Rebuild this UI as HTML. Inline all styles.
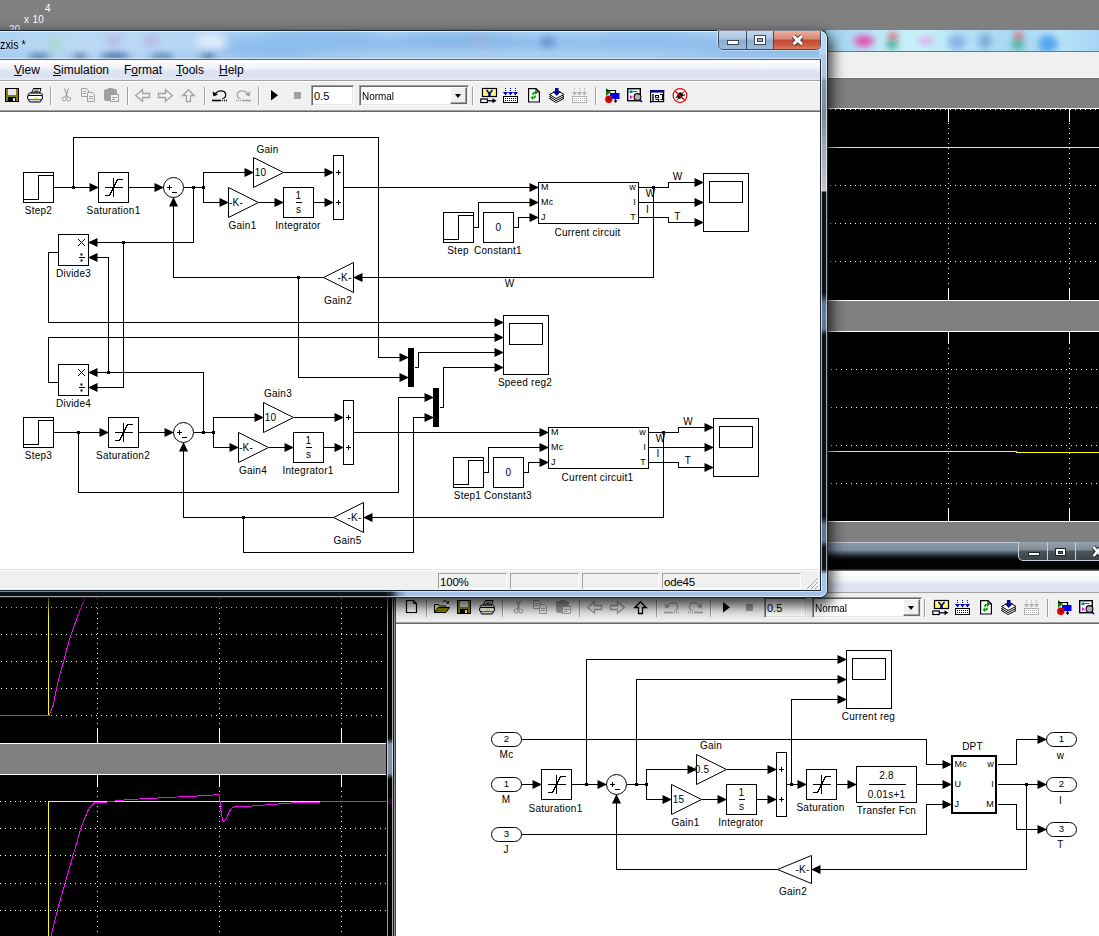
<!DOCTYPE html><html><head><meta charset="utf-8"><title>zxis</title><style>
html,body{margin:0;padding:0}
body{width:1099px;height:936px;overflow:hidden;position:relative;background:#808080;font-family:"Liberation Sans",sans-serif;font-size:12px;color:#000}
.abs{position:absolute}
.dg{position:absolute}
.dt{font-family:"Liberation Sans",sans-serif;font-size:10px;text-anchor:middle;fill:#000;letter-spacing:.25px}
#bgstrip1{left:826px;top:30px;width:273px;height:21px;background:linear-gradient(90deg,#9fd0f0 0,#bfe9f9 20%,#c9f2fb 35%,#b5e2f6 50%,#a9d6f3 70%,#b7e4f8 85%,#a8d4f4 100%);overflow:hidden}
#bgstrip1 i{position:absolute;display:block;border-radius:50%;filter:blur(3px)}
#bgstrip2{left:826px;top:51px;width:273px;height:27px;background:#f0f0f0;border-top:1px solid #6b7884;box-sizing:border-box;border-bottom:1px solid #fff}
#gray1{left:826px;top:78px;width:273px;height:30px;background:#808080;border-top:1px solid #6a6a6a;box-sizing:border-box}
#strip3{left:826px;top:300px;width:273px;height:1px;background:#fff}
/* sub window */
#sub{left:387px;top:542px;width:720px;height:400px}
#subtitle{left:0;top:0;width:720px;height:29px;background:linear-gradient(#8797a7 0,#7c8d9e 7px,#4a5662 10px,#12171c 14px,#020304 17px,#000 26px,#5c5c5c 27px,#7a7a7a 28px);border-top:1px solid #c0c6cc;box-sizing:border-box}
#subcap{left:631px;top:0;width:100px;height:19px;border:1px solid #c8d0d8;border-top:none;border-radius:0 0 5px 5px;box-sizing:border-box;background:linear-gradient(#97a3ae 0,#7d8993 45%,#4c555d 50%,#3a4249 100%)}
#subcap b{position:absolute;top:0;height:18px;width:1px;background:#c8d0d8}
#submenu{left:8px;top:29px;width:712px;height:21px;background:linear-gradient(#fff 0,#f3f5fb 40%,#dde3f3 60%,#dfe5f5 100%);border-top:1px solid #fff}
#subtool{left:8px;top:50px;width:712px;height:30px;background:#f0f0f0;border-top:1px solid #a0a0a0;box-sizing:border-box}
#subtoolb{left:8px;top:80px;width:712px;height:1px;background:#a0a0a0}
#subcanvas{left:8px;top:81px;width:712px;height:320px;background:#fff;border-left:1px solid #696969;border-top:1px solid #696969}
#subframe{left:-1px;top:29px;width:10px;height:380px;background:linear-gradient(#000 0,#000 167px,#7f93a8 173px,#7f93a8 202px,#000 208px,#000 226px,#2c0f29 231px,#000 236px,#000 100%)}
#subframe:before{content:"";position:absolute;left:0;top:0;bottom:0;width:10px;background:linear-gradient(90deg,#000 0,#000 1px,rgba(255,255,255,.6) 1px,rgba(255,255,255,.6) 2px,transparent 2px,transparent 6px,rgba(255,255,255,.65) 6px,rgba(255,255,255,.65) 7px,#14181c 7px,#14181c 8px,#8a9096 8px,#8a9096 9px,#3c4044 9px,#3c4044 10px)}
/* main window */
#win{left:-30px;top:30px;width:858px;height:568px;border-radius:8px;box-sizing:border-box;border:1px solid #1a2430;background:#0c1118;box-shadow:2px 6px 14px 2px rgba(0,0,0,.75)}
#wininner{left:0;top:0;right:0;bottom:0;border-radius:7px;overflow:hidden}
#wininner:after{content:"";position:absolute;left:0;top:0;right:0;bottom:0;border-radius:7px;border:1px solid rgba(255,255,255,.62)}
#wtitle{left:0;top:0;right:0;height:29px;background:linear-gradient(#a9d1f4 0,#91c1ee 11px,#8dbdec 20px,#9ec6ee 27px,#b5d6f3 28px)}
#wtitle i{position:absolute;display:block;border-radius:50%;filter:blur(5px)}
#wright{right:0;top:0;width:8px;height:566px;background:linear-gradient(#b9d6f2 0,#b9d6f2 22px,#b3cde9 24px,#aac4e0 46px,#8397ad 50px,#7d8fa3 76px,#7c8795 80px,#a4abb3 120px,#c5c9cd 160px,#0c1118 161px,#0c1118 262px,#5b7592 272px,#6682a2 285px,#5b7592 298px,#0c1118 304px,#0c1118 486px,#5b7592 494px,#5b7592 510px,#10151c 516px,#10151c 538px,#a3c4e8 543px,#a3c4e8 566px)}
#wbottom{left:0;right:0;bottom:0;height:8px;background:linear-gradient(90deg,#0c1118 0,#0c1118 414px,#232d3a 420px,#7d9abd 428px,#a3c4e8 436px,#a3c4e8 100%)}
#client{left:0;top:59px;width:820px;height:531px;background:#fff;border-right:1px solid #1d232b;border-top:1px solid #59626d;border-bottom:1px solid #1d232b;box-shadow:1px 0 0 0 rgba(255,255,255,.7),0 1px 0 0 rgba(255,255,255,.5),0 -1px 0 0 rgba(255,255,255,.45);box-sizing:border-box;width:821px;height:532px}
#menubar{left:0;top:60px;width:820px;height:20px;background:linear-gradient(#fdfdfe 0,#f1f3fa 40%,#dfe4f3 55%,#dde2f2 85%,#e6eaf6 100%)}
#menubar span{position:absolute;top:3px;font-size:12px;white-space:nowrap}
#menubar u{text-decoration:underline;text-underline-offset:1px;text-decoration-thickness:1px}
#toolbar{left:0;top:80px;width:820px;height:32px;background:#f0f0f0;box-sizing:border-box;border-top:1px solid #a0a0a0;border-bottom:1px solid #696969}
#toolbar:before{content:"";position:absolute;left:0;right:0;top:0;height:1px;background:#fff}
#toolbar:after{content:"";position:absolute;left:0;right:0;bottom:0;height:1px;background:#a0a0a0}
.fld{position:absolute;height:21px;box-sizing:border-box;background:#fff;border:1px solid;border-color:#a0a0a0 #fff #fff #a0a0a0;box-shadow:inset 1px 1px 0 #696969,inset -1px -1px 0 #e3e3e3;font-size:11px;line-height:20px;padding-left:2px;white-space:nowrap;overflow:hidden}
.ddb{position:absolute;right:1px;top:1px;width:17px;height:17px;background:#f0f0f0;box-sizing:border-box;border:1px solid;border-color:#fff #696969 #696969 #fff;box-shadow:inset -1px -1px 0 #a0a0a0}
.ddb:after{content:"";position:absolute;left:4px;top:6px;border:3.5px solid transparent;border-top:4px solid #000;border-bottom:none}
#status{left:0;top:570px;width:820px;height:19px;background:#f0f0f0;border-top:1px solid #fff}
#status:before{content:"";position:absolute;left:0;right:0;top:-2px;height:1px;background:#e3e3e3}
.sf{position:absolute;top:2px;height:16px;box-sizing:border-box;border:1px solid;border-color:#a0a0a0 #fff #fff #a0a0a0;font-size:11.5px;line-height:16px;padding-left:1px;letter-spacing:-.2px}
#caps{left:718px;top:31px;width:103px;height:19px;box-sizing:border-box;border:1px solid #3e4b59;border-top:none;border-radius:0 0 5px 5px;overflow:hidden;box-shadow:0 0 0 1px rgba(255,255,255,.45)}
#caps div{position:absolute;top:0;height:18px}
#cmin{left:0;width:27px;background:linear-gradient(#c7dbef 0,#a9c4e2 45%,#8aabd0 50%,#9dbadb 100%);border-right:1px solid #3e4b59}
#cmax{left:28px;width:26px;background:linear-gradient(#c7dbef 0,#a9c4e2 45%,#8aabd0 50%,#9dbadb 100%);border-right:1px solid #3e4b59}
#ccls{left:55px;width:46px;background:linear-gradient(#e8b0a2 0,#d88773 45%,#c34a31 50%,#cf5c43 80%,#dc8068 100%)}
#title{left:0;top:38px;font-size:12px;white-space:nowrap;transform:scaleX(.9);transform-origin:0 0}
</style></head><body>
<div class="abs" style="left:24px;top:14px;color:#fff;font-size:10px;letter-spacing:.3px;white-space:nowrap">x 10</div>
<div class="abs" style="left:45px;top:3px;color:#fff;font-size:10px">4</div>
<div class="abs" style="left:9px;top:24px;color:#fff;font-size:10px">20</div>
<div class="abs" id="bgstrip1"><i style="left:28px;top:5px;width:20px;height:12px;background:#e255b0"></i><i style="left:62px;top:2px;width:10px;height:9px;background:#e06a7a"></i><i style="left:60px;top:10px;width:12px;height:9px;background:#45b090"></i><i style="left:92px;top:6px;width:16px;height:10px;background:#d9b8ee"></i><i style="left:122px;top:4px;width:18px;height:16px;background:#8db4e6"></i><i style="left:152px;top:3px;width:14px;height:16px;background:#7fb0d8"></i><i style="left:188px;top:2px;width:9px;height:9px;background:#e06a7a"></i><i style="left:186px;top:10px;width:12px;height:9px;background:#45b090"></i><i style="left:212px;top:5px;width:20px;height:18px;background:#58a8ee"></i></div>
<div class="abs" id="bgstrip2"></div><div class="abs" id="gray1"></div>
<svg class="abs" style="left:0;top:0" width="1099" height="936" viewBox="0 0 1099 936" shape-rendering="crispEdges">
<rect x="826" y="108" width="273" height="193" fill="#000"/>
<rect x="826" y="331" width="273" height="191" fill="#000"/>
<rect x="0" y="590" width="387" height="154" fill="#000"/>
<rect x="0" y="774" width="387" height="162" fill="#000"/>
<path d="M826 108.5H1099M826 300.5H1099M826 331.5H1099M826 521.5H1099M0 743.5H386M0 774.5H386" stroke="#fff" fill="none"/>
<path d="M948.5 108V122M948.5 288V300M948.5 331V344M948.5 508V521M1069.5 108V122M1069.5 288V300M1069.5 331V344M1069.5 508V521M97.5 729V743M97.5 774V787M219.5 729V743M219.5 774V787M341.5 729V743M341.5 774V787" stroke="#fff" fill="none"/>
<g stroke="#fff" fill="none" stroke-dasharray="1 4"><path d="M830 109.5H1099" stroke-dashoffset="0"/><path d="M830 185.5H1099" stroke-dashoffset="0"/><path d="M830 223.5H1099" stroke-dashoffset="0"/><path d="M830 261.5H1099" stroke-dashoffset="0"/><path d="M831 369.5H1099" stroke-dashoffset="0"/><path d="M831 407.5H1099" stroke-dashoffset="0"/><path d="M831 445.5H1099" stroke-dashoffset="0"/><path d="M831 483.5H1099" stroke-dashoffset="0"/><path d="M948.5 123V288"/><path d="M948.5 348V508"/><path d="M1069.5 123V288"/><path d="M1069.5 348V508"/><path d="M1 607.5H385" stroke-dashoffset="0"/><path d="M1 634.5H385" stroke-dashoffset="0"/><path d="M1 661.5H385" stroke-dashoffset="0"/><path d="M1 688.5H385" stroke-dashoffset="0"/><path d="M1 715.5H385" stroke-dashoffset="0"/><path d="M0 801.5H387" stroke-dashoffset="0"/><path d="M0 828.5H387" stroke-dashoffset="0"/><path d="M0 855.5H387" stroke-dashoffset="0"/><path d="M0 883.5H387" stroke-dashoffset="0"/><path d="M0 910.5H387" stroke-dashoffset="0"/><path d="M97.5 598V729"/><path d="M97.5 791V936"/><path d="M219.5 598V729"/><path d="M219.5 791V936"/><path d="M341.5 598V729"/><path d="M341.5 791V936"/></g>
</svg>
<svg class="abs" style="left:0;top:0" width="1099" height="936" viewBox="0 0 1099 936" shape-rendering="crispEdges" fill="none">
<path d="M826 147.5H1099M826 451.5H1016V452.5H1099" stroke="#ffff00"/>
<path d="M48.5 597V715" stroke="#ffff00"/>
<path d="M0 715.5H49L52.800 706.5L58.200 681L63.700 661L69 641L74.600 624.600L80 610L85.5 598L86 597" stroke="#ff00ff"/>
<path d="M48.5 936V801.5H335" stroke="#ffff00"/>
<path d="M51 936L58.2 907L65.5 881.6L72.8 856L77.6 840L80.2 830L83.2 822.3L86.2 815L88 810.4L90.7 806L93 804.4L95 802.5H102L112 801.5L119 800.5L129 799.5L207 795.5L218.8 794.5L219.5 797.4L220.5 805L221.4 814.6L223.3 821.7L226.6 818.4L228.5 813.1L230.7 809.4L233 807.3L235 806.5H245L259 805.5L291 803L335 801.5H386" stroke="#ff00ff"/>
</svg>
<div class="abs" id="strip3"></div>
<div class="abs" id="sub"><div class="abs" id="subtitle"></div><div class="abs" id="subcap"><b style="left:28px"></b><b style="left:56px"></b></div><div class="abs" id="submenu"></div><div class="abs" id="subtool"></div><div class="abs" id="subtoolb"></div><div class="abs" id="subcanvas"></div><div class="abs" id="subframe"></div></div>
<svg class="abs" style="left:0;top:0" width="1099" height="936" viewBox="0 0 1099 936"><g transform="translate(452 512)"><g transform="translate(5 88)"><rect x=".5" y=".5" width="13" height="13" fill="#808000" stroke="#000"/><rect x="3" y="1" width="8" height="6" fill="#e8e8e8"/><rect x="3" y="9" width="8" height="5" fill="#000"/><rect x="8" y="10" width="2" height="3" fill="#e8e8e8"/></g><g transform="translate(27 88)" stroke="#000" fill="#fff"><path d="M4.5 5L6.5 .5h7.5l-1.5 4.5z"/><path d="M7 2h5M6.5 3.5h5" stroke-width=".7"/><path d="M1.5 8C.5 7 1.5 5 3 5h10.5c1.5 0 2.5 2 1.5 3z" fill="#e8e8e8"/><rect x=".5" y="7.5" width="15" height="4" rx="1.5"/><path d="M2 11.5v1.5c0 .6 .5 1 1 1h10c.6 0 1-.4 1-1v-1.5" fill="#d8d8d8"/><path d="M7 10h3.5" stroke="#e8e800" stroke-width="1.200"/></g><path d="M50.5 87v18" stroke="#a0a0a0" fill="none"/><path d="M51.5 87v18" stroke="#fff" fill="none"/><g transform="translate(62 88)" stroke="#a0a0a0" fill="none"><path d="M2.5 .5L5.5 9M6.5 .5L3.5 9" stroke-width="1.1"/><circle cx="2.3" cy="11" r="2"/><circle cx="6.7" cy="11" r="2"/></g><g transform="translate(81 88)" stroke="#a0a0a0" fill="#f0f0f0"><path d="M.5 .5h5l2 2v6h-7z"/><path d="M6.5 4.5h5l2 2v7h-7z"/><path d="M2 3.5h3M2 5.5h3M8 8.5h4M8 10.5h4" fill="none"/></g><g transform="translate(104 88)"><rect x=".5" y="1.5" width="12" height="11" rx="1.5" fill="#a0a0a0" stroke="#a0a0a0"/><rect x="4" y="0" width="5" height="3" fill="#a0a0a0"/><rect x="6.5" y="6.5" width="8" height="7" fill="#f0f0f0" stroke="#a0a0a0"/><path d="M8 9.5h5M8 11.5h3" stroke="#a0a0a0"/></g><path d="M127.5 87v18" stroke="#a0a0a0" fill="none"/><path d="M128.5 87v18" stroke="#fff" fill="none"/><path transform="translate(135 89)" d="M.7 6.5L7.5 .7V4.5H14.5V8.5H7.5V12.3Z" fill="#f4f4f4" stroke="#a0a0a0" stroke-width="1.3"/><path transform="translate(158 89)" d="M14.3 6.5L7.5 .7V4.5H.5V8.5H7.5V12.3Z" fill="#f4f4f4" stroke="#a0a0a0" stroke-width="1.3"/><path transform="translate(182 89)" d="M6.5 .7L.7 6.5H4.5V12.5H8.5V6.5H12.3Z" fill="#f4f4f4" stroke="#000" stroke-width="1.3"/><path d="M204.5 87v18" stroke="#a0a0a0" fill="none"/><path d="M205.5 87v18" stroke="#fff" fill="none"/><g transform="translate(212 89)" stroke="#a0a0a0" fill="none"><path d="M3 5.5C5 1 12 .5 13.5 4.5C14.5 8 12 9.5 10.5 9.5" stroke-width="1.2"/><path d="M.5 2.5L1.5 7.5L6 5.5Z" fill="#a0a0a0" stroke="none"/><path d="M0 11.5h9" stroke-width="1.6"/><path d="M10 11.5h5" stroke-dasharray="1 1" stroke-width="1.4"/></g><g transform="translate(236 89)" stroke="#a0a0a0" fill="none"><path d="M12 5.5C10 1 3 .5 1.5 4.5C.5 8 3 9.5 4.5 9.5" stroke-width="1.2"/><path d="M14.5 2.5L13.5 7.5L9 5.5Z" fill="#a0a0a0" stroke="none"/><path d="M6 11.5h9" stroke-width="1.6"/><path d="M0 11.5h5" stroke-dasharray="1 1" stroke-width="1.4"/></g><path d="M258.5 87v18" stroke="#a0a0a0" fill="none"/><path d="M259.5 87v18" stroke="#fff" fill="none"/><path transform="translate(271 90)" d="M0 0L7 5.3L0 10.6Z" fill="#000"/><rect x="294" y="92" width="7" height="7" fill="#a0a0a0"/><path d="M472.5 87v18" stroke="#a0a0a0" fill="none"/><path d="M473.5 87v18" stroke="#fff" fill="none"/><g transform="translate(480 88)"><rect x="2.5" y=".5" width="14" height="8" fill="#ffff66" stroke="#000" stroke-width="1.2"/><path d="M6.5 2l2.5 3v2.5h1V5l2.5-3" fill="none" stroke="#0000a0" stroke-width="1.6"/><rect x=".8" y="11" width="6.5" height="3.5" fill="#fff" stroke="#000" stroke-width="1.2"/><path d="M7.5 12.8h6" stroke="#000" stroke-width="1.3"/><path d="M12.5 10.3l4 2.5l-4 2.5z" fill="#000"/></g><g transform="translate(503 88)" shape-rendering="crispEdges"><g fill="#0000c0"><rect x="2" y="0" width="1" height="1"/><rect x="7" y="0" width="1" height="1"/><rect x="12" y="0" width="1" height="1"/><rect x="2" y="2" width="1" height="1"/><rect x="7" y="2" width="1" height="1"/><rect x="12" y="2" width="1" height="1"/><path d="M0 4h5l-2.5 3.5zM5 4h5l-2.5 3.5zM10 4h5l-2.5 3.5z" shape-rendering="auto"/></g><rect x=".5" y="8" width="14" height="6.5" fill="#fff" stroke="#000"/><g fill="#000"><rect x="2" y="10" width="1" height="1"/><rect x="4" y="10" width="1" height="1"/><rect x="6" y="10" width="1" height="1"/><rect x="8" y="10" width="1" height="1"/><rect x="10" y="10" width="1" height="1"/><rect x="12" y="10" width="1" height="1"/><rect x="2" y="12" width="1" height="1"/><rect x="4" y="12" width="1" height="1"/><rect x="6" y="12" width="1" height="1"/><rect x="8" y="12" width="1" height="1"/><rect x="10" y="12" width="1" height="1"/><rect x="12" y="12" width="1" height="1"/></g></g><g transform="translate(528 88)"><path d="M.6 .6h7.4l3.4 3.4v10h-10.8z" fill="#fff" stroke="#000" stroke-width="1.2"/><path d="M8 .6v3.4h3.4" fill="none" stroke="#000"/><path d="M4 6.5C4 4.5 5 4 7 4V2.5L9.5 4.8L7 7V5.5C5.8 5.5 5.5 6 5.5 7.5z" fill="#00a000"/><path d="M8 8C8 10 7 10.5 5 10.5V12L2.5 9.7L5 7.5V9C6.2 9 6.5 8.5 6.5 7z" fill="#00a000"/></g><g transform="translate(549 88)" stroke="#000" fill="#fff"><path d="M.5 10.5L8.5 6.5l6.5 4l-8 4z"/><path d="M.5 8.5L8.5 4.5l6.5 4l-8 4z"/><path d="M.5 6.5L8.5 2.5l6.5 4l-8 4z"/><path d="M6 0h3.5v3.5h2.3L7.7 8L3.7 3.5H6z" fill="#0000a0" stroke="none"/></g><g transform="translate(572 88)" shape-rendering="crispEdges"><g fill="#b0b0b0"><rect x="2" y="0" width="1" height="1"/><rect x="7" y="0" width="1" height="1"/><rect x="12" y="0" width="1" height="1"/><rect x="2" y="2" width="1" height="1"/><rect x="7" y="2" width="1" height="1"/><rect x="12" y="2" width="1" height="1"/><path d="M0 4h5l-2.5 3.5zM5 4h5l-2.5 3.5zM10 4h5l-2.5 3.5z" shape-rendering="auto"/></g><rect x=".5" y="8" width="14" height="6.5" fill="#fff" stroke="#b0b0b0"/><g fill="#b0b0b0"><rect x="2" y="10" width="1" height="1"/><rect x="4" y="10" width="1" height="1"/><rect x="6" y="10" width="1" height="1"/><rect x="8" y="10" width="1" height="1"/><rect x="10" y="10" width="1" height="1"/><rect x="12" y="10" width="1" height="1"/><rect x="2" y="12" width="1" height="1"/><rect x="4" y="12" width="1" height="1"/><rect x="6" y="12" width="1" height="1"/><rect x="8" y="12" width="1" height="1"/><rect x="10" y="12" width="1" height="1"/><rect x="12" y="12" width="1" height="1"/></g></g><path d="M595.5 87v18" stroke="#a0a0a0" fill="none"/><path d="M596.5 87v18" stroke="#fff" fill="none"/><g transform="translate(605 88)"><path d="M1 0v8l5-4z" fill="#008000"/><rect x="5" y="5" width="9.5" height="6" fill="#0000ff"/><path d="M1 2.5h9.5V14" fill="none" stroke="#000" stroke-width="1.2"/><path d="M8.5 12.5h4l-2 2.5z" fill="#000"/><circle cx="3.8" cy="11.3" r="3.7" fill="#e00000"/><path d="M3.8 9v2.5h2" stroke="#000" fill="none"/></g><g transform="translate(627 88)"><rect x=".7" y=".7" width="12.6" height="12" fill="#fff" stroke="#000" stroke-width="1.4"/><rect x="2.5" y="2.5" width="3" height="2.5" fill="#008080"/><path d="M5.5 3.5h5" stroke="#008080"/><path d="M3 7v4l3-2z" fill="#ff00ff"/><circle cx="10.5" cy="9" r="3.4" fill="#b0b0b0" stroke="#000" stroke-width="1.1"/><path d="M13 12l2 2" stroke="#0000a0" stroke-width="1.6"/></g><g transform="translate(650 90)"><rect x=".6" y=".6" width="13" height="11" fill="#fff" stroke="#000" stroke-width="1.2"/><rect x="0" y="0" width="14.2" height="2.6" fill="#000080"/><rect x="0" y="12" width="1" height="1" fill="#0000a0"/><path d="M3 4v7" stroke="#000" stroke-width="1.4"/><path d="M5.5 5.5h3v2.3h-3zM5.5 9.5h3v1.700M10 4.5h2.5v5h-2" fill="none" stroke="#000" stroke-width="1.1"/></g><g transform="translate(672 88)"><circle cx="8" cy="7.5" r="6.900" fill="#fff" stroke="#f00000" stroke-width="1.2"/><ellipse cx="8" cy="7.5" rx="2.6" ry="3.200" transform="rotate(35 8 7.5)" fill="#000"/><path d="M4 4l3 2.5M12 3.5l-3 3M3.5 9.5l3.5-1M5 12.5l2.5-3.5M11.5 11.5l-2.5-3M13 7l-3.5.5" stroke="#000" fill="none" stroke-width="1"/><path d="M3 3l10 9.5" stroke="#f00000" stroke-width="1.2"/></g></g><path transform="translate(406 600)" d="M.5 .5h7l3 3v9h-10z" fill="#fff" stroke="#000" stroke-width="1.2"/><path transform="translate(406 600)" d="M7.5 .5v3h3" fill="none" stroke="#000"/><path d="M426.5 599v18" stroke="#a0a0a0" fill="none"/><path d="M427.5 599v18" stroke="#fff" fill="none"/><g transform="translate(434 600)"><path d="M.5 12.5V4.5h4l1 1.5h6v6.5z" fill="#ffff80" stroke="#000"/><path d="M.5 12.5L4 7.5h11.5L12 12.5z" fill="#808000" stroke="#000"/><path d="M8.5 2C10 .3 12.5 .3 14 2.5" fill="none" stroke="#000"/><path d="M12 3.5h3v-3z" fill="#000"/></g><g fill="#fff" stroke="#20262c" stroke-width="1"><rect x="1028.5" y="552.5" width="11" height="3"/><rect x="1055.5" y="548.5" width="10" height="7"/></g><rect x="1058.5" y="551.5" width="4" height="2" fill="#59636d" stroke="#20262c"/><path d="M1093.5 547l8 9M1093.5 556l8-9" stroke="#20262c" stroke-width="4.5"/><path d="M1093.5 547l8 9M1093.5 556l8-9" stroke="#fff" stroke-width="2.600"/></svg>
<div class="fld" style="left:764px;top:597px;width:43px">0.5</div><div class="fld" style="left:812px;top:597px;width:110px"><span style="display:inline-block;transform:scaleX(.9);transform-origin:0 0">Normal</span><div class="ddb"></div></div>
<svg class="dg" style="left:396px;top:624px" width="703" height="312" viewBox="396 624 703 312">
<g transform="translate(.5 .5)">
<g fill="#fff" stroke="#000" shape-rendering="crispEdges"><rect x="541" y="769" width="30" height="30"/><rect x="726" y="784" width="30" height="30"/><rect x="776" y="752" width="10" height="64"/><rect x="806" y="769" width="30" height="30"/><rect x="856" y="766" width="60" height="36"/><rect x="951.5" y="755.5" width="44" height="57" stroke-width="2"/><rect x="846" y="650" width="45" height="58"/><rect x="852" y="658" width="33" height="21"/></g>
<g fill="#fff" stroke="#000"><rect x="491" y="732" width="30" height="14" rx="7"/><rect x="491" y="777" width="30" height="14" rx="7"/><rect x="491" y="827" width="30" height="14" rx="7"/><circle cx="616" cy="784" r="10"/><polygon points="696,754 696,784 726,769"/><polygon points="671,784 671,814 701,799"/><rect x="1046" y="732" width="30" height="14" rx="7"/><rect x="1046" y="777" width="30" height="14" rx="7"/><rect x="1046" y="822" width="30" height="14" rx="7"/><polygon points="811,855 811,883 777,869"/></g>
<path fill="none" stroke="#000" shape-rendering="crispEdges" d="M521 739 L926 739 L926 764 L951 764 M521 784 L541 784 M547.5 784 L565.5 784 M556 774 L556 793 M547.5 792 L552 792 L560 776 L565.5 776 M571 784 L606 784 M586 784 L586 659 L846 659 M609 784 L614 784 M611.5 781.5 L611.5 786.5 M614 789 L619 789 M626 784 L646 784 M636 784 L636 679 L846 679 M646 784 L646 769 L696 769 M646 784 L646 799 L671 799 M726 769 L776 769 M701 799 L726 799 M738 799 L744 799 M756 799 L776 799 M778.5 769 L783.5 769 M781 766.5 L781 771.5 M778.5 799 L783.5 799 M781 796.5 L781 801.5 M786 784 L806 784 M791 784 L791 699 L846 699 M812.5 784 L830.5 784 M821 774 L821 793 M812.5 792 L817 792 L825 776 L830.5 776 M836 784 L856 784 M868 784 L905 784 M916 784 L951 784 M521 834 L926 834 L926 804 L951 804 M997 764 L1016 764 L1016 739 L1046 739 M997 784 L1046 784 M1026 784 L1026 869 L811 869 M997 804 L1016 804 L1016 829 L1046 829 M777 869 L616 869 L616 794"/>
<g fill="#000"><polygon points="951.5,764 942,759.5 942,768.5"/><polygon points="541.5,784 532,779.5 532,788.5"/><polygon points="606.5,784 597,779.5 597,788.5"/><rect x="584.5" y="782.5" width="3" height="3"/><polygon points="846.5,659 837,654.5 837,663.5"/><rect x="634.5" y="782.5" width="3" height="3"/><rect x="644.5" y="782.5" width="3" height="3"/><polygon points="846.5,679 837,674.5 837,683.5"/><polygon points="696.5,769 687,764.5 687,773.5"/><polygon points="671.5,799 662,794.5 662,803.5"/><polygon points="776.5,769 767,764.5 767,773.5"/><polygon points="726.5,799 717,794.5 717,803.5"/><polygon points="776.5,799 767,794.5 767,803.5"/><polygon points="806.5,784 797,779.5 797,788.5"/><rect x="789.5" y="782.5" width="3" height="3"/><polygon points="846.5,699 837,694.5 837,703.5"/><polygon points="856.5,784 847,779.5 847,788.5"/><polygon points="951.5,784 942,779.5 942,788.5"/><polygon points="951.5,804 942,799.5 942,808.5"/><polygon points="1046.5,739 1037,734.5 1037,743.5"/><polygon points="1046.5,784 1037,779.5 1037,788.5"/><rect x="1024.5" y="782.5" width="3" height="3"/><polygon points="810.5,869 820,864.5 820,873.5"/><polygon points="1046.5,829 1037,824.5 1037,833.5"/><polygon points="616,793.5 611.5,803 620.5,803"/></g>
<g class="dt"><text x="506" y="741.86" font-size="9.6">2</text><text x="506" y="757.6">Mc</text><text x="506" y="786.86" font-size="9.6">1</text><text x="505.5" y="802.6">M</text><text x="506" y="836.86" font-size="9.6">3</text><text x="505.5" y="852.6">J</text><text x="555" y="811.1">Saturation1</text><text x="694.2" y="772.1" text-anchor="start">0.5</text><text x="710.5" y="748.6">Gain</text><text x="672.2" y="802.1" text-anchor="start">15</text><text x="685" y="825.6">Gain1</text><text x="741" y="795.4">1</text><text x="741" y="809.4">s</text><text x="740.5" y="825.6">Integrator</text><text x="820" y="810.6">Saturation</text><text x="886" y="778.1">2.8</text><text x="886" y="797.6">0.01s+1</text><text x="886" y="813.6">Transfer Fcn</text><text x="972" y="749.6">DPT</text><text x="954" y="766.56" text-anchor="start" font-size="9">Mc</text><text x="993.5" y="766.56" text-anchor="end" font-size="9">w</text><text x="954" y="786.56" text-anchor="start" font-size="9">U</text><text x="993.5" y="786.56" text-anchor="end" font-size="9">I</text><text x="954" y="806.56" text-anchor="start" font-size="9">J</text><text x="993.5" y="806.56" text-anchor="end" font-size="9">M</text><text x="1061" y="741.86" font-size="9.6">1</text><text x="1060" y="758.6">w</text><text x="1061" y="786.86" font-size="9.6">2</text><text x="1060" y="803.1">I</text><text x="1061" y="831.86" font-size="9.6">3</text><text x="1060" y="847.6">T</text><text x="809" y="872.1" text-anchor="end">-K-</text><text x="792.5" y="894.6">Gain2</text><text x="868" y="719.6">Current reg</text></g>
</g></svg>
<div class="abs" id="win"><div class="abs" id="wininner"><div class="abs" id="wtitle"><i style="left:9px;top:-1px;width:250px;height:30px;background:#c2ddf6;filter:blur(10px)"></i><i style="left:224px;top:2px;width:32px;height:16px;background:#e2effb;filter:blur(5px)"></i><i style="left:77px;top:7px;width:14px;height:12px;background:#a6d6c4;filter:blur(4px)"></i><i style="left:135px;top:5px;width:16px;height:10px;background:#b7b2e6;filter:blur(4px)"></i><i style="left:172px;top:5px;width:16px;height:10px;background:#b9b0e2;filter:blur(4px)"></i><i style="left:57px;top:23px;width:22px;height:5px;background:#42679f;filter:blur(3px)"></i><i style="left:101px;top:23px;width:16px;height:5px;background:#4a6fa8;filter:blur(3px)"></i><i style="left:129px;top:22px;width:30px;height:6px;background:#4068a4;filter:blur(3px)"></i><i style="left:179px;top:23px;width:24px;height:5px;background:#4a6fa8;filter:blur(3px)"></i><i style="left:229px;top:23px;width:16px;height:5px;background:#42679f;filter:blur(3px)"></i><i style="left:289px;top:-1px;width:120px;height:14px;background:#86b8ea;filter:blur(8px)"></i><i style="left:429px;top:3px;width:120px;height:18px;background:#86b6e9;filter:blur(8px)"></i><i style="left:570px;top:6px;width:13px;height:12px;background:#5d80c4;filter:blur(4px)"></i><i style="left:499px;top:5px;width:22px;height:12px;background:#9ab5dc;filter:blur(5px)"></i><i style="left:629px;top:1px;width:100px;height:16px;background:#8fbeee;filter:blur(8px)"></i><i style="left:329px;top:19px;width:420px;height:8px;background:#b4d5f3;filter:blur(4px)"></i></div><div class="abs" id="wright"></div><div class="abs" id="wbottom"></div></div></div>
<div class="abs" id="client"></div>
<div class="abs" id="title">zxis *</div>
<div class="abs" id="caps"><div id="cmin"></div><div id="cmax"></div><div id="ccls"></div></div>
<svg class="abs" style="left:718px;top:30px" width="103" height="20" viewBox="718 30 103 20"><rect x="727.5" y="40.5" width="11" height="4" fill="#fff" stroke="#3a4654"/><rect x="754.5" y="35.5" width="11" height="9" fill="#fff" stroke="#3a4654"/><rect x="757.5" y="38.5" width="5" height="3" fill="#8fb0d6" stroke="#3a4654"/><path d="M793.5 36.200l8.5 8M802 36.200l-8.5 8" stroke="#4a2a28" stroke-width="5" fill="none"/><path d="M793.5 36.200l8.5 8M802 36.200l-8.5 8" stroke="#fff" stroke-width="3" fill="none"/></svg>
<div class="abs" id="menubar"><span style="left:14px"><u>V</u>iew</span><span style="left:53px"><u>S</u>imulation</span><span style="left:124px">F<u>o</u>rmat</span><span style="left:176px"><u>T</u>ools</span><span style="left:219px"><u>H</u>elp</span></div>
<div class="abs" id="toolbar"></div>
<svg class="abs" style="left:0;top:80px" width="820" height="32" viewBox="0 80 820 32"><g transform="translate(5 88)"><rect x=".5" y=".5" width="13" height="13" fill="#808000" stroke="#000"/><rect x="3" y="1" width="8" height="6" fill="#e8e8e8"/><rect x="3" y="9" width="8" height="5" fill="#000"/><rect x="8" y="10" width="2" height="3" fill="#e8e8e8"/></g><g transform="translate(27 88)" stroke="#000" fill="#fff"><path d="M4.5 5L6.5 .5h7.5l-1.5 4.5z"/><path d="M7 2h5M6.5 3.5h5" stroke-width=".7"/><path d="M1.5 8C.5 7 1.5 5 3 5h10.5c1.5 0 2.5 2 1.5 3z" fill="#e8e8e8"/><rect x=".5" y="7.5" width="15" height="4" rx="1.5"/><path d="M2 11.5v1.5c0 .6 .5 1 1 1h10c.6 0 1-.4 1-1v-1.5" fill="#d8d8d8"/><path d="M7 10h3.5" stroke="#e8e800" stroke-width="1.200"/></g><path d="M50.5 87v18" stroke="#a0a0a0" fill="none"/><path d="M51.5 87v18" stroke="#fff" fill="none"/><g transform="translate(62 88)" stroke="#a0a0a0" fill="none"><path d="M2.5 .5L5.5 9M6.5 .5L3.5 9" stroke-width="1.1"/><circle cx="2.3" cy="11" r="2"/><circle cx="6.7" cy="11" r="2"/></g><g transform="translate(81 88)" stroke="#a0a0a0" fill="#f0f0f0"><path d="M.5 .5h5l2 2v6h-7z"/><path d="M6.5 4.5h5l2 2v7h-7z"/><path d="M2 3.5h3M2 5.5h3M8 8.5h4M8 10.5h4" fill="none"/></g><g transform="translate(104 88)"><rect x=".5" y="1.5" width="12" height="11" rx="1.5" fill="#a0a0a0" stroke="#a0a0a0"/><rect x="4" y="0" width="5" height="3" fill="#a0a0a0"/><rect x="6.5" y="6.5" width="8" height="7" fill="#f0f0f0" stroke="#a0a0a0"/><path d="M8 9.5h5M8 11.5h3" stroke="#a0a0a0"/></g><path d="M127.5 87v18" stroke="#a0a0a0" fill="none"/><path d="M128.5 87v18" stroke="#fff" fill="none"/><path transform="translate(135 89)" d="M.7 6.5L7.5 .7V4.5H14.5V8.5H7.5V12.3Z" fill="#f4f4f4" stroke="#a0a0a0" stroke-width="1.3"/><path transform="translate(158 89)" d="M14.3 6.5L7.5 .7V4.5H.5V8.5H7.5V12.3Z" fill="#f4f4f4" stroke="#a0a0a0" stroke-width="1.3"/><path transform="translate(182 89)" d="M6.5 .7L.7 6.5H4.5V12.5H8.5V6.5H12.3Z" fill="#f4f4f4" stroke="#a0a0a0" stroke-width="1.3"/><path d="M204.5 87v18" stroke="#a0a0a0" fill="none"/><path d="M205.5 87v18" stroke="#fff" fill="none"/><g transform="translate(212 89)" stroke="#000" fill="none"><path d="M3 5.5C5 1 12 .5 13.5 4.5C14.5 8 12 9.5 10.5 9.5" stroke-width="1.2"/><path d="M.5 2.5L1.5 7.5L6 5.5Z" fill="#000" stroke="none"/><path d="M0 11.5h9" stroke-width="1.6"/><path d="M10 11.5h5" stroke-dasharray="1 1" stroke-width="1.4"/></g><g transform="translate(236 89)" stroke="#a0a0a0" fill="none"><path d="M12 5.5C10 1 3 .5 1.5 4.5C.5 8 3 9.5 4.5 9.5" stroke-width="1.2"/><path d="M14.5 2.5L13.5 7.5L9 5.5Z" fill="#a0a0a0" stroke="none"/><path d="M6 11.5h9" stroke-width="1.6"/><path d="M0 11.5h5" stroke-dasharray="1 1" stroke-width="1.4"/></g><path d="M258.5 87v18" stroke="#a0a0a0" fill="none"/><path d="M259.5 87v18" stroke="#fff" fill="none"/><path transform="translate(271 90)" d="M0 0L7 5.3L0 10.6Z" fill="#000"/><rect x="294" y="92" width="7" height="7" fill="#a0a0a0"/><path d="M472.5 87v18" stroke="#a0a0a0" fill="none"/><path d="M473.5 87v18" stroke="#fff" fill="none"/><g transform="translate(480 88)"><rect x="2.5" y=".5" width="14" height="8" fill="#ffff66" stroke="#000" stroke-width="1.2"/><path d="M6.5 2l2.5 3v2.5h1V5l2.5-3" fill="none" stroke="#0000a0" stroke-width="1.6"/><rect x=".8" y="11" width="6.5" height="3.5" fill="#fff" stroke="#000" stroke-width="1.2"/><path d="M7.5 12.8h6" stroke="#000" stroke-width="1.3"/><path d="M12.5 10.3l4 2.5l-4 2.5z" fill="#000"/></g><g transform="translate(503 88)" shape-rendering="crispEdges"><g fill="#0000c0"><rect x="2" y="0" width="1" height="1"/><rect x="7" y="0" width="1" height="1"/><rect x="12" y="0" width="1" height="1"/><rect x="2" y="2" width="1" height="1"/><rect x="7" y="2" width="1" height="1"/><rect x="12" y="2" width="1" height="1"/><path d="M0 4h5l-2.5 3.5zM5 4h5l-2.5 3.5zM10 4h5l-2.5 3.5z" shape-rendering="auto"/></g><rect x=".5" y="8" width="14" height="6.5" fill="#fff" stroke="#000"/><g fill="#000"><rect x="2" y="10" width="1" height="1"/><rect x="4" y="10" width="1" height="1"/><rect x="6" y="10" width="1" height="1"/><rect x="8" y="10" width="1" height="1"/><rect x="10" y="10" width="1" height="1"/><rect x="12" y="10" width="1" height="1"/><rect x="2" y="12" width="1" height="1"/><rect x="4" y="12" width="1" height="1"/><rect x="6" y="12" width="1" height="1"/><rect x="8" y="12" width="1" height="1"/><rect x="10" y="12" width="1" height="1"/><rect x="12" y="12" width="1" height="1"/></g></g><g transform="translate(528 88)"><path d="M.6 .6h7.4l3.4 3.4v10h-10.8z" fill="#fff" stroke="#000" stroke-width="1.2"/><path d="M8 .6v3.4h3.4" fill="none" stroke="#000"/><path d="M4 6.5C4 4.5 5 4 7 4V2.5L9.5 4.8L7 7V5.5C5.8 5.5 5.5 6 5.5 7.5z" fill="#00a000"/><path d="M8 8C8 10 7 10.5 5 10.5V12L2.5 9.7L5 7.5V9C6.2 9 6.5 8.5 6.5 7z" fill="#00a000"/></g><g transform="translate(549 88)" stroke="#000" fill="#fff"><path d="M.5 10.5L8.5 6.5l6.5 4l-8 4z"/><path d="M.5 8.5L8.5 4.5l6.5 4l-8 4z"/><path d="M.5 6.5L8.5 2.5l6.5 4l-8 4z"/><path d="M6 0h3.5v3.5h2.3L7.7 8L3.7 3.5H6z" fill="#0000a0" stroke="none"/></g><g transform="translate(572 88)" shape-rendering="crispEdges"><g fill="#b0b0b0"><rect x="2" y="0" width="1" height="1"/><rect x="7" y="0" width="1" height="1"/><rect x="12" y="0" width="1" height="1"/><rect x="2" y="2" width="1" height="1"/><rect x="7" y="2" width="1" height="1"/><rect x="12" y="2" width="1" height="1"/><path d="M0 4h5l-2.5 3.5zM5 4h5l-2.5 3.5zM10 4h5l-2.5 3.5z" shape-rendering="auto"/></g><rect x=".5" y="8" width="14" height="6.5" fill="#fff" stroke="#b0b0b0"/><g fill="#b0b0b0"><rect x="2" y="10" width="1" height="1"/><rect x="4" y="10" width="1" height="1"/><rect x="6" y="10" width="1" height="1"/><rect x="8" y="10" width="1" height="1"/><rect x="10" y="10" width="1" height="1"/><rect x="12" y="10" width="1" height="1"/><rect x="2" y="12" width="1" height="1"/><rect x="4" y="12" width="1" height="1"/><rect x="6" y="12" width="1" height="1"/><rect x="8" y="12" width="1" height="1"/><rect x="10" y="12" width="1" height="1"/><rect x="12" y="12" width="1" height="1"/></g></g><path d="M595.5 87v18" stroke="#a0a0a0" fill="none"/><path d="M596.5 87v18" stroke="#fff" fill="none"/><g transform="translate(605 88)"><path d="M1 0v8l5-4z" fill="#008000"/><rect x="5" y="5" width="9.5" height="6" fill="#0000ff"/><path d="M1 2.5h9.5V14" fill="none" stroke="#000" stroke-width="1.2"/><path d="M8.5 12.5h4l-2 2.5z" fill="#000"/><circle cx="3.8" cy="11.3" r="3.7" fill="#e00000"/><path d="M3.8 9v2.5h2" stroke="#000" fill="none"/></g><g transform="translate(627 88)"><rect x=".7" y=".7" width="12.6" height="12" fill="#fff" stroke="#000" stroke-width="1.4"/><rect x="2.5" y="2.5" width="3" height="2.5" fill="#008080"/><path d="M5.5 3.5h5" stroke="#008080"/><path d="M3 7v4l3-2z" fill="#ff00ff"/><circle cx="10.5" cy="9" r="3.4" fill="#b0b0b0" stroke="#000" stroke-width="1.1"/><path d="M13 12l2 2" stroke="#0000a0" stroke-width="1.6"/></g><g transform="translate(650 90)"><rect x=".6" y=".6" width="13" height="11" fill="#fff" stroke="#000" stroke-width="1.2"/><rect x="0" y="0" width="14.2" height="2.6" fill="#000080"/><rect x="0" y="12" width="1" height="1" fill="#0000a0"/><path d="M3 4v7" stroke="#000" stroke-width="1.4"/><path d="M5.5 5.5h3v2.3h-3zM5.5 9.5h3v1.700M10 4.5h2.5v5h-2" fill="none" stroke="#000" stroke-width="1.1"/></g><g transform="translate(672 88)"><circle cx="8" cy="7.5" r="6.900" fill="#fff" stroke="#f00000" stroke-width="1.2"/><ellipse cx="8" cy="7.5" rx="2.6" ry="3.200" transform="rotate(35 8 7.5)" fill="#000"/><path d="M4 4l3 2.5M12 3.5l-3 3M3.5 9.5l3.5-1M5 12.5l2.5-3.5M11.5 11.5l-2.5-3M13 7l-3.5.5" stroke="#000" fill="none" stroke-width="1"/><path d="M3 3l10 9.5" stroke="#f00000" stroke-width="1.2"/></g></svg>
<div class="fld" style="left:311px;top:85px;width:43px">0.5</div><div class="fld" style="left:359px;top:85px;width:110px"><span style="display:inline-block;transform:scaleX(.9);transform-origin:0 0">Normal</span><div class="ddb"></div></div>
<svg class="dg" style="left:0px;top:112px" width="820" height="458" viewBox="0 112 820 458">
<g transform="translate(.5 .5)">
<g fill="#fff" stroke="#000" shape-rendering="crispEdges"><rect x="23" y="172" width="30" height="30"/><rect x="98" y="172" width="30" height="30"/><rect x="283" y="187" width="30" height="30"/><rect x="333" y="155" width="10" height="64"/><rect x="538" y="182" width="100" height="41"/><rect x="703" y="173" width="45" height="58"/><rect x="709" y="181" width="33" height="21"/><rect x="443" y="212" width="30" height="30"/><rect x="483" y="212" width="30" height="30"/><rect x="58" y="234" width="30" height="31"/><rect x="58" y="364" width="30" height="31"/><rect x="23" y="417" width="30" height="30"/><rect x="108" y="417" width="30" height="30"/><rect x="293" y="432" width="30" height="30"/><rect x="343" y="400" width="10" height="64"/><rect x="453" y="457" width="30" height="30"/><rect x="493" y="457" width="30" height="30"/><rect x="548" y="427" width="100" height="41"/><rect x="713" y="418" width="45" height="58"/><rect x="719" y="426" width="33" height="21"/><rect x="503" y="315" width="45" height="59"/><rect x="509" y="323" width="33" height="21"/></g>
<g fill="#fff" stroke="#000"><circle cx="173" cy="187" r="10"/><polygon points="253,157 253,187 283,172"/><polygon points="228,187 228,217 258,202"/><polygon points="353,262 353,292 323,277"/><circle cx="183" cy="432" r="10"/><polygon points="263,402 263,432 293,417"/><polygon points="238,432 238,462 268,447"/><polygon points="363,502 363,532 333,517"/></g>
<path fill="none" stroke="#000" shape-rendering="crispEdges" d="M23 199 L38 199 L38 175 L53 175 M104.5 187 L122.5 187 M113 177 L113 196 M104.5 195 L109 195 L117 179 L122.5 179 M166 187 L171 187 M168.5 184.5 L168.5 189.5 M171 192 L176 192 M295 202 L301 202 M335.5 172 L340.5 172 M338 169.5 L338 174.5 M335.5 202 L340.5 202 M338 199.5 L338 204.5 M443 239 L458 239 L458 215 L473 215 M77.5 238.5 L84.5 245.5 M77.5 245.5 L84.5 238.5 M78 257 L84 257 M53 187 L98 187 M73 187 L73 137 L378 137 L378 357 L408 357 M128 187 L163 187 M183 187 L203 187 M203 187 L203 172 L253 172 M203 187 L203 202 L228 202 M193 187 L193 242 L88 242 M283 172 L333 172 M258 202 L283 202 M313 202 L333 202 M343 187 L538 187 M473 227 L478 227 L478 202 L538 202 M513 227 L518 227 L518 217 L538 217 M638 187 L668 187 L668 182 L703 182 M653 187 L653 277 L353 277 M638 202 L703 202 M638 217 L668 217 L668 222 L703 222 M323 277 L173 277 L173 197 M298 277 L298 377 L408 377 M58 252 L48 252 L48 322 L503 322 M58 382 L48 382 L48 337 L503 337 M123 242 L123 387 L88 387 M108 372 L108 257 L88 257 M203 432 L203 372 L88 372 M77.5 368.5 L84.5 375.5 M77.5 375.5 L84.5 368.5 M78 387 L84 387 M23 444 L38 444 L38 420 L53 420 M78 432 L78 492 L398 492 L398 397 L433 397 M53 432 L108 432 M114.5 432 L132.5 432 M123 422 L123 441 M114.5 440 L119 440 L127 424 L132.5 424 M138 432 L173 432 M176 432 L181 432 M178.5 429.5 L178.5 434.5 M181 437 L186 437 M193 432 L213 432 M213 432 L213 417 L263 417 M213 432 L213 447 L238 447 M293 417 L343 417 M268 447 L293 447 M305 447 L311 447 M323 447 L343 447 M345.5 417 L350.5 417 M348 414.5 L348 419.5 M345.5 447 L350.5 447 M348 444.5 L348 449.5 M353 432 L548 432 M453 484 L468 484 L468 460 L483 460 M483 472 L488 472 L488 447 L548 447 M523 472 L528 472 L528 462 L548 462 M648 432 L678 432 L678 427 L713 427 M663 432 L663 517 L363 517 M648 447 L713 447 M648 462 L678 462 L678 467 L713 467 M333 517 L183 517 L183 442 M243 517 L243 552 L413 552 L413 417 L433 417 M414 367 L418 367 L418 352 L503 352 M439 407 L443 407 L443 367 L503 367"/>
<g fill="#000"><rect x="80" y="253" width="2" height="2"/><rect x="80" y="259" width="2" height="2"/><polygon points="98.5,187 89,182.5 89,191.5"/><rect x="71.5" y="185.5" width="3" height="3"/><polygon points="408.5,357 399,352.5 399,361.5"/><polygon points="163.5,187 154,182.5 154,191.5"/><rect x="191.5" y="185.5" width="3" height="3"/><rect x="201.5" y="185.5" width="3" height="3"/><polygon points="253.5,172 244,167.5 244,176.5"/><polygon points="228.5,202 219,197.5 219,206.5"/><polygon points="87.5,242 97,237.5 97,246.5"/><rect x="121.5" y="240.5" width="3" height="3"/><polygon points="333.5,172 324,167.5 324,176.5"/><polygon points="283.5,202 274,197.5 274,206.5"/><polygon points="333.5,202 324,197.5 324,206.5"/><polygon points="538.5,187 529,182.5 529,191.5"/><polygon points="538.5,202 529,197.5 529,206.5"/><polygon points="538.5,217 529,212.5 529,221.5"/><polygon points="703.5,182 694,177.5 694,186.5"/><rect x="651.5" y="185.5" width="3" height="3"/><polygon points="352.5,277 362,272.5 362,281.5"/><polygon points="703.5,202 694,197.5 694,206.5"/><polygon points="703.5,222 694,217.5 694,226.5"/><polygon points="173,196.5 168.5,206 177.5,206"/><rect x="296.5" y="275.5" width="3" height="3"/><polygon points="408.5,377 399,372.5 399,381.5"/><polygon points="503.5,322 494,317.5 494,326.5"/><polygon points="503.5,337 494,332.5 494,341.5"/><polygon points="87.5,387 97,382.5 97,391.5"/><polygon points="87.5,257 97,252.5 97,261.5"/><rect x="106.5" y="370.5" width="3" height="3"/><polygon points="87.5,372 97,367.5 97,376.5"/><rect x="80" y="383" width="2" height="2"/><rect x="80" y="389" width="2" height="2"/><rect x="76.5" y="430.5" width="3" height="3"/><polygon points="433.5,397 424,392.5 424,401.5"/><polygon points="108.5,432 99,427.5 99,436.5"/><polygon points="173.5,432 164,427.5 164,436.5"/><rect x="201.5" y="430.5" width="3" height="3"/><rect x="211.5" y="430.5" width="3" height="3"/><polygon points="263.5,417 254,412.5 254,421.5"/><polygon points="238.5,447 229,442.5 229,451.5"/><polygon points="343.5,417 334,412.5 334,421.5"/><polygon points="293.5,447 284,442.5 284,451.5"/><polygon points="343.5,447 334,442.5 334,451.5"/><polygon points="548.5,432 539,427.5 539,436.5"/><polygon points="548.5,447 539,442.5 539,451.5"/><polygon points="548.5,462 539,457.5 539,466.5"/><polygon points="713.5,427 704,422.5 704,431.5"/><rect x="661.5" y="430.5" width="3" height="3"/><polygon points="362.5,517 372,512.5 372,521.5"/><polygon points="713.5,447 704,442.5 704,451.5"/><polygon points="713.5,467 704,462.5 704,471.5"/><polygon points="183,441.5 178.5,451 187.5,451"/><rect x="241.5" y="515.5" width="3" height="3"/><polygon points="433.5,417 424,412.5 424,421.5"/><rect x="407.5" y="347.5" width="6" height="39"/><polygon points="503.5,352 494,347.5 494,356.5"/><rect x="432.5" y="387.5" width="6" height="39"/><polygon points="503.5,367 494,362.5 494,371.5"/></g>
<g class="dt"><text x="38" y="213.6">Step2</text><text x="113" y="213.6">Saturation1</text><text x="254.2" y="175.1" text-anchor="start">10</text><text x="267" y="152.1">Gain</text><text x="228.5" y="205.1" text-anchor="start">-K-</text><text x="242" y="228.6">Gain1</text><text x="298" y="198.4">1</text><text x="298" y="212.4">s</text><text x="297.5" y="228.6">Integrator</text><text x="587" y="235.1">Current circuit</text><text x="540.5" y="189.56" text-anchor="start" font-size="9">M</text><text x="635.5" y="189.56" text-anchor="end" font-size="9">w</text><text x="540.5" y="204.56" text-anchor="start" font-size="9">Mc</text><text x="635.5" y="204.56" text-anchor="end" font-size="9">I</text><text x="540.5" y="219.56" text-anchor="start" font-size="9">J</text><text x="635.5" y="219.56" text-anchor="end" font-size="9">T</text><text x="457.5" y="253.6">Step</text><text x="498" y="230.1">0</text><text x="497.5" y="253.6">Constant1</text><text x="351" y="280.1" text-anchor="end">-K-</text><text x="337.5" y="303.6">Gain2</text><text x="73" y="276.6">Divide3</text><text x="677" y="179.1">W</text><text x="650" y="196.1">W</text><text x="647" y="212.1">I</text><text x="677" y="219.1">T</text><text x="509" y="286.1">W</text><text x="73" y="406.1">Divide4</text><text x="38" y="458.6">Step3</text><text x="122.5" y="458.6">Saturation2</text><text x="264.2" y="420.1" text-anchor="start">10</text><text x="277.5" y="396.6">Gain3</text><text x="238.5" y="450.1" text-anchor="start">-K-</text><text x="252.5" y="473.6">Gain4</text><text x="308" y="443.4">1</text><text x="308" y="457.4">s</text><text x="307.5" y="473.6">Integrator1</text><text x="467" y="498.6">Step1</text><text x="508" y="475.1">0</text><text x="507.5" y="498.6">Constant3</text><text x="597" y="480.1">Current circuit1</text><text x="550.5" y="434.56" text-anchor="start" font-size="9">M</text><text x="645.5" y="434.56" text-anchor="end" font-size="9">w</text><text x="550.5" y="449.56" text-anchor="start" font-size="9">Mc</text><text x="645.5" y="449.56" text-anchor="end" font-size="9">I</text><text x="550.5" y="464.56" text-anchor="start" font-size="9">J</text><text x="645.5" y="464.56" text-anchor="end" font-size="9">T</text><text x="687.5" y="424.1">W</text><text x="660" y="441.1">W</text><text x="657.5" y="456.1">I</text><text x="687.5" y="463.1">T</text><text x="361" y="520.1" text-anchor="end">-K-</text><text x="347" y="543.1">Gain5</text><text x="524.5" y="385.6">Speed reg2</text></g>
</g></svg>
<div class="abs" id="status"><div class="sf" style="left:438px;width:69px">100%</div><div class="sf" style="left:510px;width:69px"></div><div class="sf" style="left:582px;width:77px"></div><div class="sf" style="left:662px;width:139px">ode45</div><svg class="abs" style="left:806px;top:6px" width="13" height="13" viewBox="0 0 13 13"><path d="M12 1L1 12M12 5L5 12M12 9L9 12" stroke="#a0a0a0"/><path d="M13 1L2 12M13 5L6 12M13 9L10 12" stroke="#fff"/></svg></div>
</body></html>
